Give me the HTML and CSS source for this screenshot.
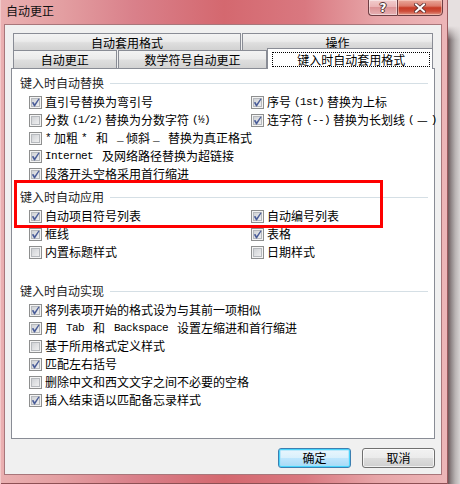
FILE: index.html
```html
<!DOCTYPE html>
<html lang="zh-CN">
<head>
<meta charset="utf-8">
<title>自动更正</title>
<link rel="stylesheet" href="styles.css">
</head>
<body>
<div class="desk">
  <div class="win">
    <div class="titlebar">
      <div class="title">自动更正</div>
      <div class="capbtns">
        <div class="cap help">?</div>
        <div class="cap close">
          <svg width="12" height="10" viewBox="0 0 12 10">
            <path d="M2 1.5 L10 8.5 M10 1.5 L2 8.5" stroke="#5a2c2c" stroke-width="3.6" stroke-linecap="square"/>
            <path d="M2 1.5 L10 8.5 M10 1.5 L2 8.5" stroke="#ffffff" stroke-width="2" stroke-linecap="square"/>
          </svg>
        </div>
      </div>
    </div>
    <div class="client">
      <div class="tabs">
        <div class="tabrow r1">
          <div class="tab w1">自动套用格式</div>
          <div class="tab w2">操作</div>
        </div>
        <div class="tabrow r2">
          <div class="tab w3">自动更正</div>
          <div class="tab w4">数学符号自动更正</div>
          <div class="tab sel"><span class="focus">键入时自动套用格式</span></div>
        </div>
      </div>
      <div class="panel">
        <section class="grp g1">
          <div class="gh"><span>键入时自动替换</span></div>
          <div class="rows rows5">
            <div class="item"><span class="cb on"><svg viewBox="0 0 11 11"><path d="M1.8 5.6 L3.5 4.9 L4.6 6.9 L8.5 1.4 L9.6 2.1 L4.9 9.4 L4.1 9.4 Z"/></svg></span>直引号替换为弯引号</div>
            <div class="item"><span class="cb"></span>分数<span class="en">(1/2)</span>替换为分数字符<span class="en">(½)</span></div>
            <div class="item"><span class="cb"></span><span class="en">*</span>加粗<span class="en">* </span>和<span class="en"> _</span>倾斜<span class="en">_ </span>替换为真正格式</div>
            <div class="item"><span class="cb on"><svg viewBox="0 0 11 11"><path d="M1.8 5.6 L3.5 4.9 L4.6 6.9 L8.5 1.4 L9.6 2.1 L4.9 9.4 L4.1 9.4 Z"/></svg></span><span class="en">Internet </span>及网络路径替换为超链接</div>
            <div class="item"><span class="cb on"><svg viewBox="0 0 11 11"><path d="M1.8 5.6 L3.5 4.9 L4.6 6.9 L8.5 1.4 L9.6 2.1 L4.9 9.4 L4.1 9.4 Z"/></svg></span>段落开头空格采用首行缩进</div>
            <div class="item"><span class="cb on"><svg viewBox="0 0 11 11"><path d="M1.8 5.6 L3.5 4.9 L4.6 6.9 L8.5 1.4 L9.6 2.1 L4.9 9.4 L4.1 9.4 Z"/></svg></span>序号<span class="en">(1st)</span>替换为上标</div>
            <div class="item"><span class="cb on"><svg viewBox="0 0 11 11"><path d="M1.8 5.6 L3.5 4.9 L4.6 6.9 L8.5 1.4 L9.6 2.1 L4.9 9.4 L4.1 9.4 Z"/></svg></span>连字符<span class="en">(--)</span>替换为长划线<span class="en">(</span>—<span class="en">)</span></div>
          </div>
        </section>
        <section class="grp g2">
          <div class="gh"><span>键入时自动应用</span></div>
          <div class="rows rows3">
            <div class="item"><span class="cb on"><svg viewBox="0 0 11 11"><path d="M1.8 5.6 L3.5 4.9 L4.6 6.9 L8.5 1.4 L9.6 2.1 L4.9 9.4 L4.1 9.4 Z"/></svg></span>自动项目符号列表</div>
            <div class="item"><span class="cb on"><svg viewBox="0 0 11 11"><path d="M1.8 5.6 L3.5 4.9 L4.6 6.9 L8.5 1.4 L9.6 2.1 L4.9 9.4 L4.1 9.4 Z"/></svg></span>框线</div>
            <div class="item"><span class="cb"></span>内置标题样式</div>
            <div class="item"><span class="cb on"><svg viewBox="0 0 11 11"><path d="M1.8 5.6 L3.5 4.9 L4.6 6.9 L8.5 1.4 L9.6 2.1 L4.9 9.4 L4.1 9.4 Z"/></svg></span>自动编号列表</div>
            <div class="item"><span class="cb on"><svg viewBox="0 0 11 11"><path d="M1.8 5.6 L3.5 4.9 L4.6 6.9 L8.5 1.4 L9.6 2.1 L4.9 9.4 L4.1 9.4 Z"/></svg></span>表格</div>
            <div class="item"><span class="cb"></span>日期样式</div>
          </div>
        </section>
        <section class="grp g3">
          <div class="gh"><span>键入时自动实现</span></div>
          <div class="rows rows6">
            <div class="item"><span class="cb on"><svg viewBox="0 0 11 11"><path d="M1.8 5.6 L3.5 4.9 L4.6 6.9 L8.5 1.4 L9.6 2.1 L4.9 9.4 L4.1 9.4 Z"/></svg></span>将列表项开始的格式设为与其前一项相似</div>
            <div class="item"><span class="cb on"><svg viewBox="0 0 11 11"><path d="M1.8 5.6 L3.5 4.9 L4.6 6.9 L8.5 1.4 L9.6 2.1 L4.9 9.4 L4.1 9.4 Z"/></svg></span>用<span class="en"> Tab </span>和<span class="en"> Backspace </span>设置左缩进和首行缩进</div>
            <div class="item"><span class="cb"></span>基于所用格式定义样式</div>
            <div class="item"><span class="cb on"><svg viewBox="0 0 11 11"><path d="M1.8 5.6 L3.5 4.9 L4.6 6.9 L8.5 1.4 L9.6 2.1 L4.9 9.4 L4.1 9.4 Z"/></svg></span>匹配左右括号</div>
            <div class="item"><span class="cb"></span>删除中文和西文文字之间不必要的空格</div>
            <div class="item"><span class="cb on"><svg viewBox="0 0 11 11"><path d="M1.8 5.6 L3.5 4.9 L4.6 6.9 L8.5 1.4 L9.6 2.1 L4.9 9.4 L4.1 9.4 Z"/></svg></span>插入结束语以匹配备忘录样式</div>
          </div>
        </section>
        <div class="mark"></div>
      </div>
      <div class="btns">
        <button class="btn def">确定</button>
        <button class="btn">取消</button>
      </div>
    </div>
  </div>
  <div class="edge"></div>
</div>
</body>
</html>
```

FILE: styles.css
```css
html, body {
  margin: 0;
  padding: 0;
}
body {
  width: 460px;
  height: 484px;
  overflow: hidden;
  font-family: "Noto Sans CJK SC", "Noto Sans", sans-serif;
  font-size: 12px;
  color: #000;
  background: #d8d0d0;
}
.desk {
  display: flex;
  width: 460px;
  height: 484px;
}
.win {
  width: 448px;
  height: 484px;
  display: flex;
  flex-direction: column;
  background:
    linear-gradient(to right, #eab0b1 0%, #e39ea1 14%, #d9808a 30%, #d4686f 50%, #d97880 68%, #e7a5a8 84%, #edb6b8 100%);
  box-shadow: inset 1px 0 0 #f3caca, inset -1px 0 0 #9a5a5e, inset 0 -1px 0 #8e5054;
}
.titlebar {
  height: 24px;
  display: flex;
  padding: 0 5px 0 6px;
  flex: none;
}
.title {
  flex: 1;
  align-self: center;
  line-height: 16px;
  margin-top: -2px;
  color: #111;
}
.capbtns {
  display: flex;
  align-items: flex-start;
  margin-top: -1px;
}
.cap {
  height: 17px;
  box-sizing: border-box;
  border: 1px solid #6e3f44;
  display: flex;
  align-items: center;
  justify-content: center;
}
.help {
  width: 29px;
  border-right: none;
  border-radius: 0 0 0 4px;
  background: linear-gradient(#f2cdcd 0%, #ebb4b6 45%, #dc9497 50%, #e6b0b2 100%);
  box-shadow: inset 0 0 0 1px rgba(255,255,255,0.45);
  color: #fff;
  font-family: "DejaVu Sans", sans-serif;
  font-weight: bold;
  font-size: 12px;
  line-height: 14px;
  text-shadow: 0 0 1px #3a2020, 1px 0 0 #5a3838, -1px 0 0 #5a3838, 0 1px 0 #5a3838, 0 -1px 0 #5a3838;
}
.close {
  width: 46px;
  border-radius: 0 0 4px 0;
  background: linear-gradient(#e9a99b 0%, #dc7a6a 40%, #c73b25 52%, #cd4d3a 75%, #e29786 100%);
  box-shadow: inset 0 0 0 1px rgba(255,220,210,0.5);
}
.client {
  margin-left: 4px;
  width: 438px;
  height: 451px;
  box-sizing: border-box;
  border: 1px solid #a8767a;
  background: #f0f0f0;
  padding: 8px 6px 0 6px;
  flex: none;
}
.tabs {
  margin: 0 2px;
}
.tabrow {
  display: flex;
  gap: 1px;
}
.r1 { height: 17px; }
.r2 { height: 18px; align-items: flex-end; }
.tab {
  box-sizing: border-box;
  height: 100%;
  border: 1px solid #898c95;
  border-bottom: none;
  background: linear-gradient(#f3f3f3 0%, #ebebeb 45%, #dedede 55%, #d2d2d2 100%);
  display: flex;
  align-items: center;
  justify-content: center;
  line-height: 15px;
  white-space: nowrap;
}
.w1 { width: 228px; }
.w2 { width: 191px; }
.w3 { width: 104px; }
.w4 { width: 150px; }
.tab.sel {
  width: 166px;
  height: 21px;
  margin-left: -1px;
  margin-bottom: -1px;
  background: #fff;
  position: relative;
  z-index: 1;
  padding: 3px 2px 2px 4px;
  align-items: flex-start;
}
.focus {
  display: flex;
  align-items: center;
  justify-content: center;
  width: 100%;
  height: 15px;
  box-sizing: border-box;
  border: 1px dotted #000;
}
.panel {
  position: relative;
  height: 371px;
  box-sizing: border-box;
  border: 1px solid #898c95;
  background: #fff;
  padding: 6px 6px 0 8px;
}
.gh {
  display: flex;
  align-items: center;
  height: 16px;
  line-height: 16px;
  gap: 6px;
  color: #1e1e1e;
}
.gh::after {
  content: "";
  flex: 1;
  height: 1px;
  background: #d5dfe5;
}
.g2 { margin-top: 6px; }
.g3 { margin-top: 22px; }
.rows {
  margin: 2px 0 0 9px;
  display: grid;
  grid-auto-flow: column;
  grid-template-columns: 222px 1fr;
}
.rows5 { grid-template-rows: repeat(5, 18px); }
.rows3 { grid-template-rows: repeat(3, 18px); }
.rows6 { grid-template-rows: repeat(6, 18px); grid-template-columns: 1fr; }
.item {
  display: flex;
  align-items: center;
  gap: 3px;
  white-space: nowrap;
  line-height: 18px;
  height: 18px;
}
.en {
  font-family: "Liberation Mono", "DejaVu Sans Mono", monospace;
  font-size: 11px;
  letter-spacing: -0.6px;
  white-space: pre;
}
.cb {
  flex: none;
  width: 13px;
  height: 13px;
  box-sizing: border-box;
  border: 1px solid #8e8f8f;
  background: linear-gradient(135deg, #c6c9cd 0%, #e2e3e5 55%, #f6f6f6 100%);
  box-shadow: inset 0 0 0 1px #f4f4f4, inset 0 0 0 2px #b6b9bd;
  display: flex;
}
.cb svg {
  width: 11px;
  height: 11px;
  fill: #4a5d98;
}
.mark {
  position: absolute;
  left: 2px;
  top: 111px;
  width: 369px;
  height: 48px;
  box-sizing: border-box;
  border: 3px solid #fe0000;
}
.btns {
  display: flex;
  justify-content: flex-end;
  gap: 11px;
  margin-top: 9px;
}
.btn {
  width: 73px;
  height: 20px;
  margin: 0;
  padding: 0;
  box-sizing: border-box;
  border: 1px solid #707070;
  border-radius: 3px;
  background: linear-gradient(#f2f2f2 0%, #ebebeb 48%, #dddddd 52%, #cfcfcf 100%);
  box-shadow: inset 0 0 0 1px rgba(255,255,255,0.7);
  font-family: "Noto Sans CJK SC", sans-serif;
  font-size: 12px;
  line-height: 16px;
  color: #000;
}
.btn.def {
  border-color: #3c7fb1;
  box-shadow: inset 0 0 0 1px #48d4fc, inset 0 0 0 2px rgba(160,225,250,0.6);
  background: linear-gradient(#eaf6fd 0%, #d9f0fc 48%, #bee6fd 52%, #a7d9f5 100%);
}
.edge {
  flex: 1;
  background:
    linear-gradient(#e6e0e0 0px, #e6e0e0 26px, transparent 40px),
    linear-gradient(to right, #6d5456 0%, #8e8586 25%, #b9b3b3 60%, #d6d2d2 100%);
}
```
